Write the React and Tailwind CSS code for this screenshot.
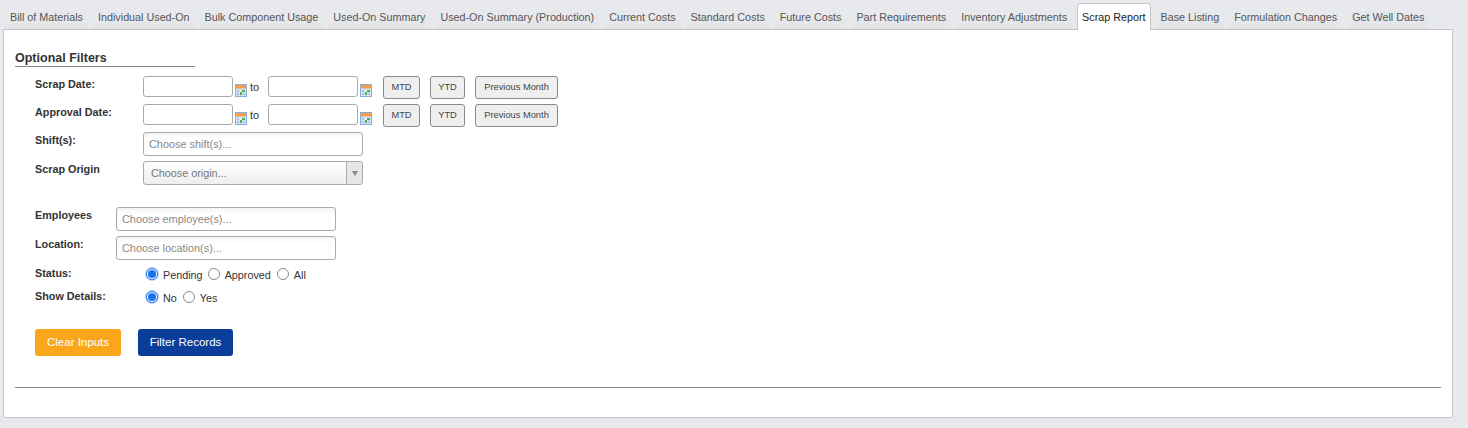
import React from "react";

const tabs = ["Bill of Materials","Individual Used-On","Bulk Component Usage","Used-On Summary","Used-On Summary (Production)","Current Costs","Standard Costs","Future Costs","Part Requirements","Inventory Adjustments","Scrap Report","Base Listing","Formulation Changes","Get Well Dates"];

function Cal() {
  return (
    <svg width="12" height="13" viewBox="0 0 12 13" className="shrink-0">
      <rect x="0.5" y="0.5" width="11" height="12" fill="#d4e3f5" stroke="#86aeda" />
      <rect x="1" y="1" width="10" height="3.5" fill="#f5a04e" />
      <rect x="2" y="6" width="2" height="2" fill="#a9c3e0" />
      <rect x="2" y="9" width="2" height="2" fill="#a9c3e0" />
      <rect x="5" y="6" width="2" height="2" fill="#e8f2e0" />
      <rect x="5" y="8" width="2" height="3" fill="#4cae4c" />
      <rect x="7" y="6" width="3" height="2" fill="#4cae4c" />
      <rect x="8" y="9" width="2" height="2" fill="#a9c3e0" />
    </svg>
  );
}

function Btn({ w, children }) {
  return <button className={`h-[23px] ${w} rounded-[3px] border border-[#8a8a8a] bg-[#efefef] text-[#444] text-[9.3px] leading-none`}>{children}</button>;
}

function DateRow({ label }) {
  return (
    <div className="flex h-[28px] items-start pl-[20px]">
      <div className="w-[108px] pt-[1px] text-[10.8px] leading-[14px] font-bold text-[#333]">{label}</div>
      <div className="w-[90px] h-[21px] rounded-[3px] border border-[#aaa] bg-white" />
      <div className="ml-[2px] mt-[8px]"><Cal /></div>
      <div className="w-[18px] ml-[3px] mt-[4px] text-[11px] leading-[14px] text-[#333]">to</div>
      <div className="w-[90px] h-[21px] rounded-[3px] border border-[#aaa] bg-white" />
      <div className="ml-[2px] mt-[8px]"><Cal /></div>
      <div className="flex gap-[10px] ml-[11px]">
        <Btn w="w-[37px]">MTD</Btn>
        <Btn w="w-[35px]">YTD</Btn>
        <Btn w="w-[83px]">Previous Month</Btn>
      </div>
    </div>
  );
}

function Chosen({ text, w = "w-[220px]" }) {
  return (
    <div className={`${w} h-[24px] rounded-[3px] border border-[#aaa] bg-gradient-to-b from-[#f4f4f4] to-white to-[25%] pl-[5px] text-[10.9px] leading-[22px] text-[#888]`}>{text}</div>
  );
}

function Radio({ checked }) {
  return (
    <span className={`w-[12px] h-[12px] rounded-full shrink-0 bg-white border flex items-center justify-center ${checked ? "border-[#1a73e8] shadow-[0_0_0_1px_#b8d4fa]" : "border-[#8a8a8a]"}`}>
      {checked && <span className="block w-[8px] h-[8px] rounded-full bg-[#1a73e8]" />}
    </span>
  );
}

function RadioRow({ label, items, h }) {
  return (
    <div className={`flex items-start pl-[20px] ${h}`}>
      <div className="w-[111px] text-[10.8px] leading-[14px] font-bold text-[#333]">{label}</div>
      <div className="flex items-center">
        {items.map(([t, c, gap]) => (
          <React.Fragment key={t}>
            <Radio checked={c} />
            <span className={`ml-[5px] ${gap} text-[10.8px] leading-[14px] mt-[2px] text-[#333]`}>{t}</span>
          </React.Fragment>
        ))}
      </div>
    </div>
  );
}

export default function App() {
  return (
    <div className="w-[1468px] h-[428px] overflow-hidden bg-[#e8e9ed] font-['Liberation_Sans',Arial,sans-serif]">
      <div className="flex pl-[5px] pt-[3px] h-[29px] relative z-10 gap-[5px]">
        {tabs.map((t) => {
          const active = t === "Scrap Report";
          return (
            <div key={t} className={active
              ? "h-[27px] px-[4px] rounded-t-[3px] border border-b-0 border-[#c5c5c9] bg-white text-[10.78px] leading-[26px] text-[#222]"
              : "h-[26px] px-[5px] bg-gradient-to-b from-[#e8e9ed] from-[50%] to-[#e3e4e6] text-[10.78px] leading-[28px] text-[#555]"}>{t}</div>
          );
        })}
      </div>
      <div className="ml-[3px] w-[1450px] h-[389px] rounded-b-[3px] border border-[#c5c5c9] bg-white">
        <div className="pl-[11px] pt-[20px]">
          <div className="w-[180px] h-[17px] border-b border-[#888] text-[12.5px] leading-[16px] font-bold text-[#333]">Optional Filters</div>
          <div className="pt-[9px]">
            <DateRow label="Scrap Date:" />
            <DateRow label="Approval Date:" />
            <div className="flex h-[29px] pl-[20px]">
              <div className="w-[108px] pt-[1px] text-[10.8px] leading-[14px] font-bold text-[#333]">Shift(s):</div>
              <Chosen text="Choose shift(s)..." />
            </div>
            <div className="flex h-[46px] pl-[20px]">
              <div className="w-[108px] pt-[1px] text-[10.8px] leading-[14px] font-bold text-[#333]">Scrap Origin</div>
              <div className="relative w-[220px] h-[24px] rounded-[3px] border border-[#aaa] bg-gradient-to-b from-white to-[#eeeeee] pl-[7px] text-[10.8px] leading-[22px] text-[#777]">
                Choose origin...
                <div className="absolute right-0 top-0 bottom-0 w-[16px] rounded-r-[3px] border-l border-[#aaa] bg-[#e6e6e6] flex items-center justify-center">
                  <div className="w-0 h-0 border-x-[3px] border-x-transparent border-t-[5px] border-t-[#888]" />
                </div>
              </div>
            </div>
            <div className="flex h-[29px] pl-[20px]">
              <div className="w-[81px] pt-[1px] text-[10.8px] leading-[14px] font-bold text-[#333]">Employees</div>
              <Chosen text="Choose employee(s)..." />
            </div>
            <div className="flex h-[30px] pl-[20px]">
              <div className="w-[81px] pt-[1px] text-[10.8px] leading-[14px] font-bold text-[#333]">Location:</div>
              <Chosen text="Choose location(s)..." />
            </div>
            <RadioRow label="Status:" h="h-[23px]" items={[["Pending", true, "mr-[5px]"], ["Approved", false, "mr-[6px]"], ["All", false, ""]]} />
            <RadioRow label="Show Details:" h="h-[31px]" items={[["No", true, "mr-[6px]"], ["Yes", false, ""]]} />
          </div>
          <div className="flex gap-[17px] pl-[20px] pt-[9px]">
            <button className="w-[86px] h-[27px] rounded-[3px] bg-[#faa61a] text-white text-[11.5px]">Clear Inputs</button>
            <button className="w-[95px] h-[27px] rounded-[3px] bg-[#0b3d9a] text-white text-[11.5px]">Filter Records</button>
          </div>
          <div className="mt-[31px] w-[1426px] border-t border-[#888]" />
        </div>
      </div>
    </div>
  );
}
